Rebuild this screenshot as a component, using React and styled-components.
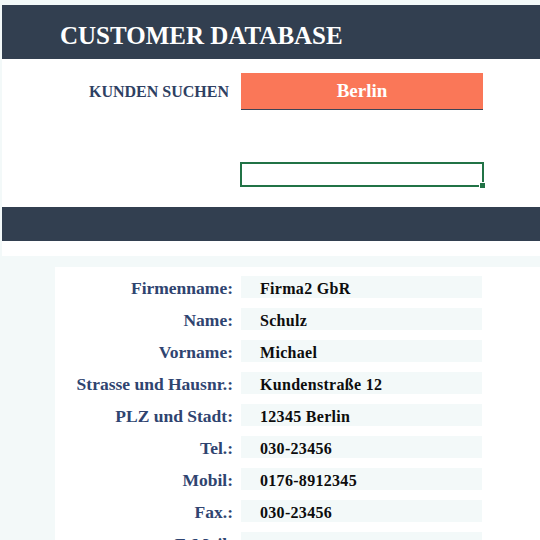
import React from "react";
import styled, { createGlobalStyle } from "styled-components";

const Global = createGlobalStyle`
  html, body { margin: 0; padding: 0; background: #f3f9f9; }
  body { font-family: "Liberation Serif", "DejaVu Serif", serif; }
`;

const Page = styled.div`
  width: 540px;
  height: 540px;
  overflow: hidden;
  padding-top: 5px;
  box-sizing: border-box;
`;

const Top = styled.div`
  margin-left: 2px;
  display: flex;
  flex-direction: column;
`;

const Header = styled.header`
  height: 54px;
  box-sizing: border-box;
  background: #323f50;
  display: flex;
  align-items: center;
  padding-left: 58px;
  padding-top: 7px;
`;

const Title = styled.h1`
  margin: 0;
  font-size: 25px;
  font-weight: 700;
  color: #ffffff;
`;

const SearchArea = styled.section`
  background: #ffffff;
  height: 148px;
  box-sizing: border-box;
  padding-top: 14px;
  display: grid;
  grid-template-columns: 227px 242px;
  column-gap: 12px;
  grid-template-rows: 37px;
  row-gap: 52px;
  align-content: start;
`;

const SearchLabel = styled.div`
  text-align: right;
  align-self: center;
  font-size: 16px;
  font-weight: 700;
  color: #2e4062;
`;

const SearchBox = styled.div`
  background: #fa7758;
  border-bottom: 1px solid #3c4456;
  display: flex;
  align-items: center;
  justify-content: center;
  color: #ffffff;
  font-size: 19px;
  font-weight: 700;
`;

const SelectedCell = styled.div`
  grid-column: 2;
  position: relative;
  margin-left: -1px;
  width: 244px;
  height: 25px;
  box-sizing: border-box;
  border: 2px solid #217346;
`;

const Handle = styled.span`
  position: absolute;
  right: -3px;
  bottom: -3px;
  width: 5px;
  height: 5px;
  background: #217346;
  border: 1px solid #ffffff;
  border-right: none;
  border-bottom: none;
`;

const Bar = styled.div`
  height: 34px;
  background: #323f50;
`;

const Spacer = styled.div`
  height: 15px;
  background: #ffffff;
`;

const Bottom = styled.section`
  padding-top: 11px;
  padding-left: 55px;
`;

const Panel = styled.div`
  background: #ffffff;
  padding-top: 9px;
  display: grid;
  grid-template-columns: 178px 241px;
  column-gap: 8px;
  row-gap: 10px;
  grid-auto-rows: 22px;
`;

const Label = styled.div`
  text-align: right;
  align-self: center;
  font-size: 17.5px;
  font-weight: 700;
  color: #2f4470;
  white-space: nowrap;
  margin-top: 3px;
`;

const Value = styled.div`
  background: #f3f9f9;
  padding-left: 19px;
  display: flex;
  align-items: center;
  font-size: 16px;
  letter-spacing: 0.3px;
  font-weight: 700;
  color: #0d0d0d;
  padding-top: 3px;
  box-sizing: border-box;
`;

const rows = [
  ["Firmenname:", "Firma2 GbR"],
  ["Name:", "Schulz"],
  ["Vorname:", "Michael"],
  ["Strasse und Hausnr.:", "Kundenstraße 12"],
  ["PLZ und Stadt:", "12345 Berlin"],
  ["Tel.:", "030-23456"],
  ["Mobil:", "0176-8912345"],
  ["Fax.:", "030-23456"],
  ["E-Mail:", ""],
];

export default function App() {
  return (
    <>
      <Global />
      <Page>
        <Top>
          <Header>
            <Title>CUSTOMER DATABASE</Title>
          </Header>
          <SearchArea>
            <SearchLabel>KUNDEN SUCHEN</SearchLabel>
            <SearchBox>Berlin</SearchBox>
            <SelectedCell>
              <Handle />
            </SelectedCell>
          </SearchArea>
          <Bar />
          <Spacer />
        </Top>
        <Bottom>
          <Panel>
            {rows.map(([l, v]) => (
              <React.Fragment key={l}>
                <Label>{l}</Label>
                <Value>{v}</Value>
              </React.Fragment>
            ))}
          </Panel>
        </Bottom>
      </Page>
    </>
  );
}
